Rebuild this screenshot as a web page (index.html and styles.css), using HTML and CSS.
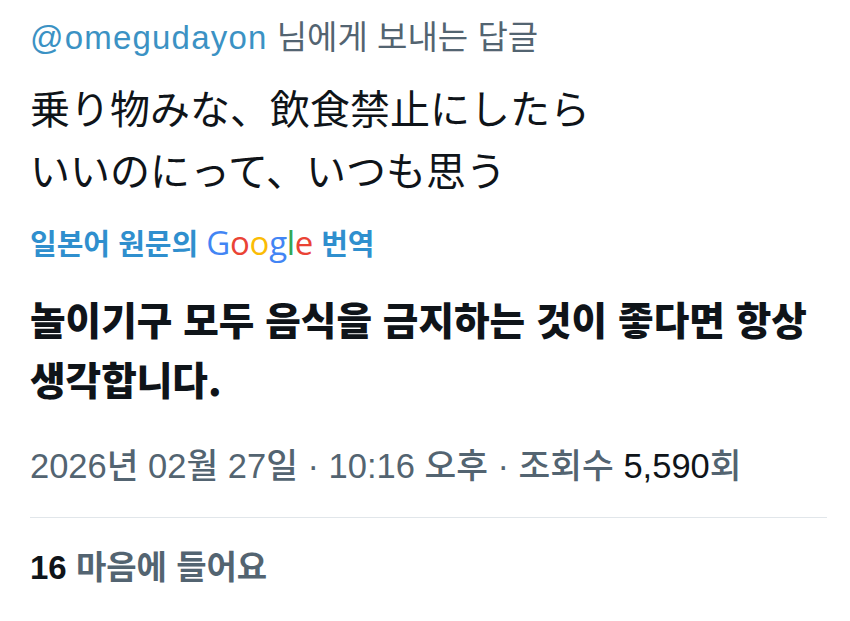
FILE: index.html
```html
<!DOCTYPE html>
<html lang="ko">
<head>
<meta charset="utf-8">
<link rel="stylesheet" href="styles.css">
</head>
<body>
<main class="tweet">
  <div class="reply"><span class="handle">@omegudayon</span> 님에게 보내는 답글</div>
  <div class="original" lang="ja">
    <div class="line">乗り物みな、飲食禁止にしたら</div>
    <div class="line">いいのにって、いつも思う</div>
  </div>
  <div class="translate">일본어 원문의 <span class="google"><span class="gb">G</span><span class="gr">o</span><span class="gy">o</span><span class="gb">g</span><span class="gg">l</span><span class="gr">e</span></span> 번역</div>
  <div class="translated">
    <div class="line">놀이기구 모두 음식을 금지하는 것이 좋다면 항상</div>
    <div class="line">생각합니다.</div>
  </div>
  <div class="meta">2026년 02월 27일 · 10:16 오후 · 조회수 <span class="views">5,590</span>회</div>
  <div class="divider"></div>
  <div class="likes"><span class="count">16</span> 마음에 들어요</div>
</main>
</body>
</html>
```

FILE: styles.css
```css
html, body {
  margin: 0;
  padding: 0;
  background: #ffffff;
}

.tweet {
  padding: 17px 23px 0 30px;
  font-family: "Liberation Sans", "Noto Sans CJK KR", sans-serif;
  color: #0f1419;
}

.reply {
  font-family: "Noto Sans CJK KR", sans-serif;
  font-size: 33px;
  line-height: 36px;
  color: #536471;
  white-space: nowrap;
}

.handle {
  font-family: "Liberation Sans", sans-serif;
  font-size: 33px;
  letter-spacing: 1.2px;
  color: #3b92c4;
}

.original {
  margin-top: 20px;
  font-family: "Noto Sans CJK JP", sans-serif;
  font-size: 40px;
  line-height: 62px;
  color: #0f1419;
  white-space: nowrap;
}

.translate {
  margin-top: 22px;
  font-family: "Noto Sans CJK KR", sans-serif;
  font-size: 29px;
  line-height: 40px;
  font-weight: 700;
  color: #2f8fce;
  white-space: nowrap;
}

.google {
  font-family: "Open Sans", "Liberation Sans", sans-serif;
  font-weight: 500;
  font-size: 33px;
  letter-spacing: -0.3px;
}

.gb { color: #4285f4; }
.gr { color: #ea4335; }
.gy { color: #fbbc05; }
.gg { color: #34a853; }

.translated {
  margin-top: 25px;
  font-family: "Noto Sans CJK KR", sans-serif;
  font-weight: 900;
  font-size: 38.7px;
  line-height: 60px;
  color: #0f1419;
  white-space: nowrap;
}

.meta {
  margin-top: 38px;
  font-family: "Liberation Sans", "Noto Sans CJK KR", sans-serif;
  font-weight: 500;
  font-size: 34.5px;
  line-height: 40px;
  color: #536471;
  white-space: nowrap;
}

.views {
  color: #0f1419;
}

.divider {
  margin-top: 31px;
  border-top: 1px solid #e1e6ea;
}

.likes {
  margin-top: 30px;
  font-family: "Liberation Sans", "Noto Sans CJK KR", sans-serif;
  font-size: 33px;
  line-height: 40px;
  font-weight: 700;
  color: #536471;
  white-space: nowrap;
}

.count {
  color: #0f1419;
}
```
